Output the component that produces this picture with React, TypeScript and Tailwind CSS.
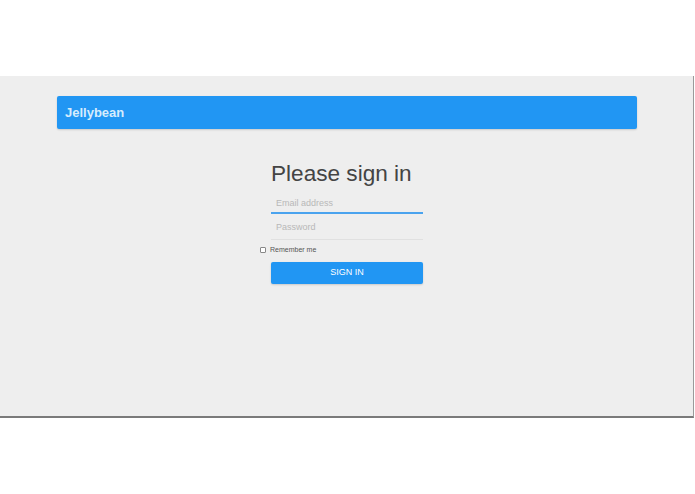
export default function App() {
  return (
    <div className="h-[494px] w-[695px] bg-white" style={{ fontFamily: '"Liberation Sans", Arial, sans-serif' }}>
      <div className="h-[76px]" />
      <div className="h-[342px] w-[694px] border-b-2 border-r border-b-[#7a7a7a] border-r-[#9a9a9a] bg-[#eeeeee] pt-5">
        <nav className="mx-[57px] flex h-[33px] w-[580px] items-center rounded-[2px] bg-[#2196f3] px-2 shadow-[0_1px_2px_rgba(0,0,0,0.15)]">
          <span className="text-[13px] font-bold text-[#d6ecfd]">Jellybean</span>
        </nav>
        <form className="ml-[271px] mt-[31px] w-[152px]">
          <h2 className="whitespace-nowrap text-[22.6px] leading-[28px] text-[#444]">Please sign in</h2>
          <div className="mt-[10px] pb-[3px] pl-[5px] text-[9px] leading-[11px] text-[#b8b8b8]">
            Email address
          </div>
          <div className="h-[2px] w-full bg-[#4aa3ee]" />
          <div className="mt-[8px] border-b border-b-[#e0e0e0] pb-[6px] pl-[5px] text-[9px] leading-[11px] text-[#b8b8b8]">
            Password
          </div>
          <label className="-ml-[11px] mt-[5px] flex items-center gap-[4px] text-[7px] text-[#555]">
            <span className="h-[6px] w-[6px] rounded-[1px] border border-[#888] bg-white" />
            Remember me
          </label>
          <button type="button" className="mt-[6px] flex h-[22px] w-[152px] items-center justify-center rounded-[2px] bg-[#2196f3] text-[9px] text-white shadow-[0_1px_2px_rgba(0,0,0,0.15)]">
            SIGN IN
          </button>
        </form>
      </div>
    </div>
  );
}
